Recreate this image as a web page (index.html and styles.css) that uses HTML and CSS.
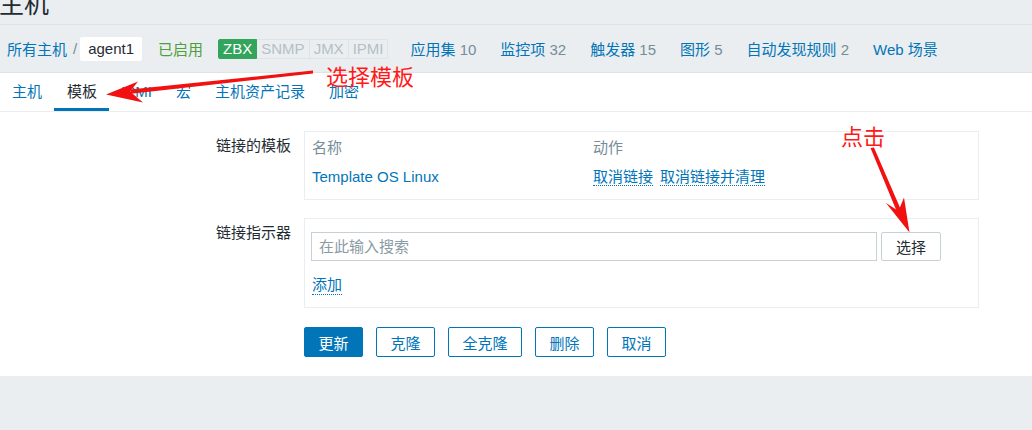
FILE: index.html
```html
<!DOCTYPE html>
<html lang="zh">
<head>
<meta charset="utf-8">
<title>主机</title>
<link rel="stylesheet" href="styles.css">
</head>
<body>
<div class="page">
  <header class="title-bar"><h1 class="title">主机</h1></header>

  <nav class="crumbs">
    <a class="link">所有主机</a>
    <span class="sep">/</span>
    <span class="current">agent1</span>
    <span class="status">已启用</span>
    <span class="badges">
      <span class="badge on">ZBX</span><span class="badge">SNMP</span><span class="badge">JMX</span><span class="badge">IPMI</span>
    </span>
    <a class="item">应用集 <span class="count">10</span></a>
    <a class="item">监控项 <span class="count">32</span></a>
    <a class="item">触发器 <span class="count">15</span></a>
    <a class="item">图形 <span class="count">5</span></a>
    <a class="item">自动发现规则 <span class="count">2</span></a>
    <a class="item">Web 场景</a>
  </nav>

  <div class="tabs">
    <a class="tab">主机</a>
    <a class="tab active">模板</a>
    <a class="tab">IPMI</a>
    <a class="tab">宏</a>
    <a class="tab">主机资产记录</a>
    <a class="tab">加密</a>
  </div>

  <main class="content">
    <div class="form">
      <div class="label">链接的模板</div>
      <div class="box linked">
        <div class="trow head">
          <span class="cname">名称</span>
          <span class="cact">动作</span>
        </div>
        <div class="trow data">
          <span class="cname"><a class="link">Template OS Linux</a></span>
          <span class="cact"><a class="dot">取消链接</a><a class="dot second">取消链接并清理</a></span>
        </div>
      </div>

      <div class="label">链接指示器</div>
      <div class="box linker">
        <div class="search">
          <div class="input">在此输入搜索</div>
          <button class="select">选择</button>
        </div>
        <a class="dot add">添加</a>
      </div>

      <div class="buttons">
        <button class="btn main">更新</button>
        <button class="btn">克隆</button>
        <button class="btn">全克隆</button>
        <button class="btn">删除</button>
        <button class="btn">取消</button>
      </div>
    </div>
  </main>

  <svg class="annot" width="1032" height="430" viewBox="0 0 1032 430">
    <polygon points="313,70.5 313,73.5 131,93.8 130,89.6" fill="#f21111"/>
    <polygon points="106,94.5 138,81.5 130,91.5 143,102.5" fill="#f21111"/>
    <polygon points="870.5,148 874,147.5 901,210 897,212" fill="#f21111"/>
    <polygon points="909.5,232.5 886,203 898.5,211 904,197.5" fill="#f21111"/>
  </svg>
  <div class="note note1">选择模板</div>
  <div class="note note2">点击</div>
</div>
</body>
</html>
```

FILE: styles.css
```css
* { box-sizing: border-box; }

html, body {
  margin: 0;
  padding: 0;
}

body {
  background: #ebeef0;
  font-family: "Liberation Sans", "Noto Sans CJK SC", sans-serif;
  font-size: 15px;
  color: #1f2c33;
  width: 1032px;
  height: 430px;
  overflow: hidden;
}

.page {
  position: relative;
  width: 1032px;
  height: 430px;
}

a { text-decoration: none; cursor: pointer; }

.link { color: #0275b8; }

/* title */
.title-bar {
  height: 25px;
  overflow: hidden;
  border-bottom: 1px solid #dde3e6;
}
.title {
  margin: -12px 0 0 -1px;
  font-size: 25px;
  line-height: 32px;
  font-weight: normal;
  color: #1f2c33;
}

/* breadcrumbs / nav */
.crumbs {
  height: 48px;
  display: flex;
  align-items: center;
  padding-left: 7px;
  border-bottom: 1px solid #dde3e6;
}
.sep {
  color: #768d99;
  margin: 0 3px 0 6px;
}
.current {
  background: #ffffff;
  height: 24px;
  line-height: 24px;
  padding: 0 8px;
  border-radius: 2px;
  color: #1f2c33;
}
.status {
  color: #4f9e3c;
  margin-left: 16px;
}
.badges {
  display: flex;
  margin-left: 15px;
  margin-right: 22px;
}
.badge {
  height: 20px;
  line-height: 18px;
  padding: 0 4px;
  border: 1px solid #dde3e6;
  border-left-width: 0;
  background: #ebeef0;
  color: #b3bfc6;
}
.badge.on {
  background: #32a45b;
  border: 1px solid #32a45b;
  color: #ffffff;
  border-radius: 2px 0 0 2px;
}
.badge:last-child { border-radius: 0 2px 2px 0; }

.item {
  color: #0275b8;
  margin-right: 24px;
}
.count { color: #768d99; }

/* tabs */
.tabs {
  height: 39px;
  background: #ffffff;
  display: flex;
  border-bottom: 1px solid #ebeef0;
}
.tab {
  height: 38px;
  padding: 3px 12px 0;
  line-height: 32px;
  color: #0275b8;
  border-bottom: 3px solid transparent;
}
.tab.active {
  color: #1f2c33;
  border-bottom-color: #0275b8;
  padding-left: 13px;
}

/* content */
.content {
  background: #ffffff;
  padding: 19px 0 19px;
}
.form {
  display: grid;
  grid-template-columns: 291px 675px;
  column-gap: 13px;
  row-gap: 18px;
}
.label {
  text-align: right;
  padding-top: 3px;
  line-height: 24px;
}
.box {
  border: 1px solid #ebeef0;
}
.linked {
  padding: 4px 7px 10px;
}
.trow {
  display: flex;
  line-height: 24px;
}
.trow.data { margin-top: 5px; }
.cname { width: 281px; }
.head { color: #768d99; }
.dot {
  color: #0275b8;
  border-bottom: 1px dotted #0275b8;
}
.dot.second { margin-left: 7px; }

.linker {
  padding: 13px 7px 12px 6px;
}
.search {
  display: flex;
  gap: 4px;
}
.input {
  width: 566px;
  height: 29px;
  border: 1px solid #c6d0d6;
  line-height: 27px;
  padding-left: 7px;
  color: #8a9ba4;
}
.select {
  width: 60px;
  height: 29px;
  background: #ffffff;
  border: 1px solid #c6d0d6;
  border-radius: 2px;
  font: inherit;
  color: #1f2c33;
  padding: 0;
}
.add {
  display: inline-block;
  margin: 15px 0 0 1px;
  line-height: 18px;
}

.buttons {
  grid-column: 2;
  display: flex;
  gap: 13px;
  margin-top: 1px;
}
.btn {
  height: 30px;
  padding: 0 13.5px;
  background: #ffffff;
  border: 1px solid #0275b8;
  border-radius: 2px;
  color: #0275b8;
  font: inherit;
}
.btn.main {
  background: #0275b8;
  color: #ffffff;
}

/* annotations */
.annot {
  position: absolute;
  left: 0;
  top: 0;
  pointer-events: none;
}
.note {
  position: absolute;
  color: #ff1a1a;
  font-size: 22px;
  line-height: 26px;
  font-family: "Noto Sans CJK SC", sans-serif;
}
.note1 { left: 326px; top: 62px; }
.note2 { left: 841px; top: 122px; }
```
